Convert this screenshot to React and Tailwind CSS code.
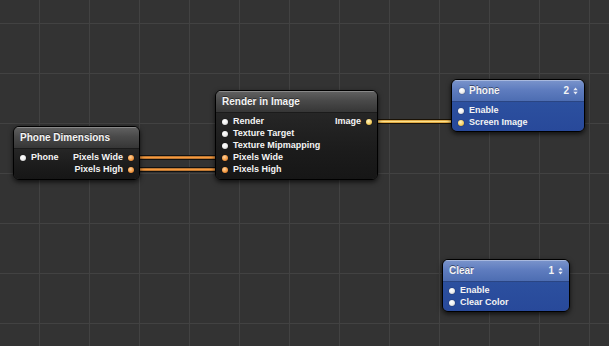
import React from "react";

const DOT = {
  white: "bg-[radial-gradient(circle_at_40%_35%,#ffffff_0%,#f2f2f2_45%,#b9b9b9_100%)]",
  orange: "bg-[radial-gradient(circle_at_40%_35%,#ffd2a0_0%,#f5a04a_50%,#c8661c_100%)]",
  yellow: "bg-[radial-gradient(circle_at_40%_35%,#fff5c8_0%,#f8d46a_50%,#c99a2a_100%)]",
};

function Dot({ color = "white" }) {
  return <span className={`block w-[6px] h-[6px] rounded-full shrink-0 shadow-[0_0_1px_rgba(0,0,0,0.9)] ${DOT[color]}`} />;
}

function Row({ left, leftColor = "white", right, rightColor = "white" }) {
  return (
    <div className="flex items-center justify-between h-[12px]">
      <div className="flex items-center gap-[5px] pl-[6px]">
        {left ? (
          <>
            <Dot color={leftColor} />
            <span>{left}</span>
          </>
        ) : null}
      </div>
      <div className="flex items-center gap-[5px] pr-[5px]">
        {right ? (
          <>
            <span>{right}</span>
            <Dot color={rightColor} />
          </>
        ) : null}
      </div>
    </div>
  );
}

function Arrows() {
  return (
    <svg width="5" height="8" viewBox="0 0 5 8" className="ml-[4px]">
      <path d="M2.5 0.5 L4.7 3.2 L0.3 3.2 Z" fill="#e8ecf5" />
      <path d="M2.5 7.5 L4.7 4.8 L0.3 4.8 Z" fill="#e8ecf5" />
    </svg>
  );
}

function Node({ x, y, w, title, blue, titleDot, count, children }) {
  return (
    <div
      className={`absolute rounded-[6px] border border-black overflow-hidden shadow-[0_2px_5px_rgba(0,0,0,0.7)] font-['Liberation_Sans',Arial,sans-serif] font-bold text-[#f4f4f4]`}
      style={{ left: x, top: y, width: w }}
    >
      <div
        className={`h-[22px] flex items-center pl-[6px] pr-[6px] text-[10px] border-b ${
          blue
            ? "bg-[linear-gradient(to_bottom,#7b95cc_0%,#5f7dbf_45%,#4d6db2_100%)] border-[#2a4583] shadow-[inset_0_1px_0_rgba(255,255,255,0.35)]"
            : "bg-[linear-gradient(to_bottom,#626262_0%,#4a4a4a_45%,#363636_100%)] border-[#1b1b1b] shadow-[inset_0_1px_0_rgba(255,255,255,0.25)]"
        }`}
      >
        {titleDot ? (
          <span className="mr-[4px] ml-[1px]">
            <Dot />
          </span>
        ) : null}
        <span className="[text-shadow:0_-1px_0_rgba(0,0,0,0.45)]">{title}</span>
        {count ? (
          <span className="ml-auto flex items-center">
            <span>{count}</span>
            <Arrows />
          </span>
        ) : null}
      </div>
      <div
        className={`pt-[3px] text-[9px] ${
          blue
            ? "pb-[2px] bg-[linear-gradient(to_bottom,#2c509f_0%,#28499a_100%)]"
            : "pb-[3px] bg-[linear-gradient(to_bottom,#262626_0%,#1b1b1b_60%,#161616_100%)]"
        }`}
      >
        {children}
      </div>
    </div>
  );
}

export default function App() {
  return (
    <div className="relative w-[609px] h-[346px] overflow-hidden bg-[#333333] [background-image:linear-gradient(to_right,#424242_1px,transparent_1px),linear-gradient(to_bottom,#424242_1px,transparent_1px)] [background-size:50px_50px] [background-position:39px_23px]">
      <svg className="absolute left-0 top-0" width="609" height="346">
        <g strokeLinecap="butt">
          <line x1="130" y1="157.5" x2="225" y2="157.5" stroke="#111" strokeWidth="5" />
          <line x1="130" y1="157.5" x2="225" y2="157.5" stroke="#f79a3e" strokeWidth="2.5" />
          <line x1="130" y1="169.5" x2="225" y2="169.5" stroke="#111" strokeWidth="5" />
          <line x1="130" y1="169.5" x2="225" y2="169.5" stroke="#f79a3e" strokeWidth="2.5" />
          <line x1="368" y1="121.5" x2="460" y2="121.5" stroke="#1a1206" strokeWidth="5" />
          <line x1="368" y1="121.5" x2="460" y2="121.5" stroke="#d99a2e" strokeWidth="3" />
          <line x1="368" y1="121.5" x2="460" y2="121.5" stroke="#fbe08a" strokeWidth="1.5" />
        </g>
      </svg>

      <Node x={13} y={126} w={127} title="Phone Dimensions">
        <Row left="Phone" right="Pixels Wide" rightColor="orange" />
        <Row right="Pixels High" rightColor="orange" />
      </Node>

      <Node x={215} y={90} w={163} title="Render in Image">
        <Row left="Render" right="Image" rightColor="yellow" />
        <Row left="Texture Target" />
        <Row left="Texture Mipmapping" />
        <Row left="Pixels Wide" leftColor="orange" />
        <Row left="Pixels High" leftColor="orange" />
      </Node>

      <Node x={451} y={79} w={134} title="Phone" blue titleDot count="2">
        <Row left="Enable" />
        <Row left="Screen Image" leftColor="yellow" />
      </Node>

      <Node x={442} y={259} w={128} title="Clear" blue count="1">
        <Row left="Enable" />
        <Row left="Clear Color" />
      </Node>
    </div>
  );
}
